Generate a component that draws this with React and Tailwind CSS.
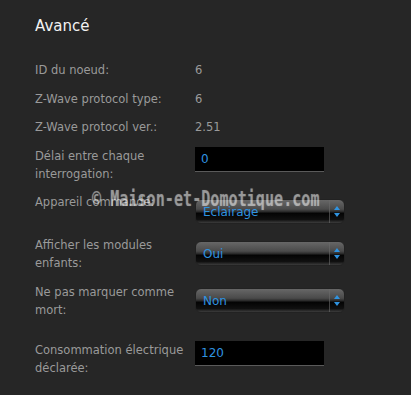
import { useState } from "react";

const labelCls = "w-[160px] shrink-0 text-[11.5px] leading-[18px] text-[#9a9a9a]";

const TextInput = ({ value }) => (
  <div className="flex h-[25px] w-[129px] items-center border-b border-[#5a5a5a] bg-black pl-[6px] text-[12px] text-[#2f93e0]">
    {value}
  </div>
);

const Select = ({ value }) => (
  <div className="relative flex h-[25px] w-[150px] items-center rounded-[6px] border border-[#222222] bg-[linear-gradient(to_bottom,#676767_0%,#4a4a4a_40%,#2c2c2c_50%,#040404_58%,#101010_85%,#3c3c3c_100%)] pl-[7px] text-[12px] text-[#2f93e0]">
    <span className="flex-1">{value}</span>
    <div className="h-full w-px bg-[#6a6a6a]/60" />
    <div className="flex w-[14px] justify-center">
      <svg width="6" height="11" viewBox="0 0 6 11">
        <path d="M3 0 L6 4 L0 4 Z" fill="#2f93e0" />
        <path d="M3 11 L6 7 L0 7 Z" fill="#2f93e0" />
      </svg>
    </div>
  </div>
);

export default function App() {
  const [rows] = useState([
    { label: "ID du noeud:", value: "6", mt: "mt-[25px]" },
    { label: "Z-Wave protocol type:", value: "6", mt: "mt-[11px]" },
    { label: "Z-Wave protocol ver.:", value: "2.51", mt: "mt-[10px]" },
  ]);

  return (
    <div className="relative h-[395px] w-[411px] overflow-hidden bg-[#262626] px-[35px] pt-[16px] font-['DejaVu_Sans',sans-serif]">
      <h2 className="text-[15px] leading-[20px] text-[#f2f2f2]">Avancé</h2>

      {rows.map((r) => (
        <div key={r.label} className={`flex ${r.mt}`}>
          <div className={labelCls}>{r.label}</div>
          <div className="text-[11.5px] leading-[18px] text-[#9a9a9a]">{r.value}</div>
        </div>
      ))}

      <div className="mt-[11px] flex items-start">
        <div className={labelCls}>Délai entre chaque interrogation:</div>
        <TextInput value="0" />
      </div>

      <div className="mt-[10px] flex items-start">
        <div className={labelCls}>Appareil commandé:</div>
        <div className="mt-[6px]"><Select value="Eclairage" /></div>
      </div>

      <div className="mt-[12px] flex items-start">
        <div className={labelCls}>Afficher les modules enfants:</div>
        <div className="mt-[5px]"><Select value="Oui" /></div>
      </div>

      <div className="mt-[11px] flex items-start">
        <div className={labelCls}>Ne pas marquer comme mort:</div>
        <div className="mt-[5px]"><Select value="Non" /></div>
      </div>

      <div className="mt-[22px] flex items-start">
        <div className={labelCls}>Consommation électrique déclarée:</div>
        <TextInput value="120" />
      </div>

      {/* watermark */}
      <div className="pointer-events-none absolute left-[92px] top-[187px] origin-left scale-x-[0.72] whitespace-nowrap font-['DejaVu_Sans_Mono',monospace] text-[21px] font-bold leading-[24px] text-white/35 [text-shadow:0_0_1px_rgba(255,255,255,0.3)]">
        © Maison-et-Domotique.com
      </div>
    </div>
  );
}
